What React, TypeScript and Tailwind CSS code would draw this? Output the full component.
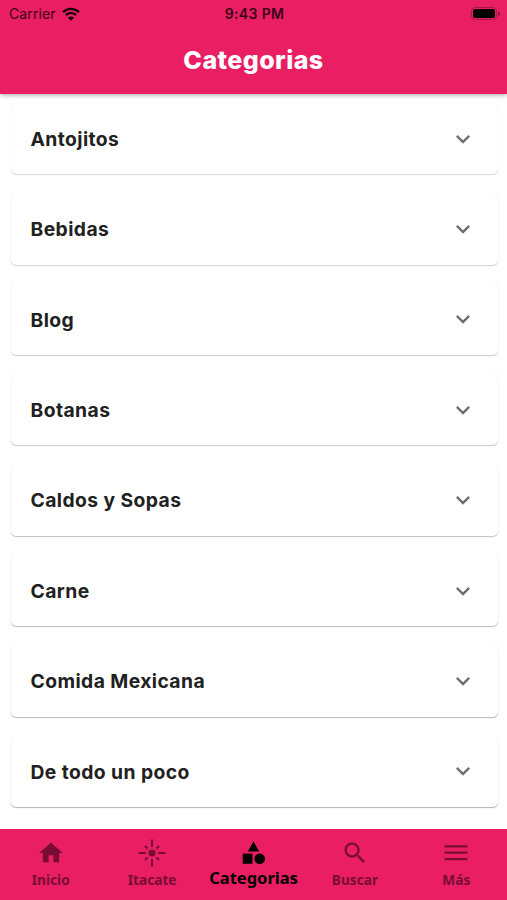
import React from "react";

const categories = [
  { name: "Antojitos", shadow: "shadow-[0_1px_1px_rgba(0,0,0,0.14),0_0_1px_rgba(0,0,0,0.1)]" },
  { name: "Bebidas", shadow: "shadow-[0_1px_1px_rgba(0,0,0,0.18),0_0_1px_rgba(0,0,0,0.1)]" },
  { name: "Blog", shadow: "shadow-[0_1px_1px_rgba(0,0,0,0.2),0_0_1px_rgba(0,0,0,0.1)]" },
  { name: "Botanas", shadow: "shadow-[0_1px_1px_rgba(0,0,0,0.22),0_0_1px_rgba(0,0,0,0.1)]" },
  { name: "Caldos y Sopas", shadow: "shadow-[0_1px_1px_rgba(0,0,0,0.24),0_0_1px_rgba(0,0,0,0.1)]" },
  { name: "Carne", shadow: "shadow-[0_1px_1px_rgba(0,0,0,0.26),0_0_1px_rgba(0,0,0,0.1)]" },
  { name: "Comida Mexicana", shadow: "shadow-[0_1px_1px_rgba(0,0,0,0.28),0_0_1px_rgba(0,0,0,0.1)]" },
  { name: "De todo un poco", shadow: "shadow-[0_1px_1px_rgba(0,0,0,0.3),0_0_1px_rgba(0,0,0,0.1)]" },
];

const icons = {
  home: <path d="M10 20v-6h4v6h5v-8h3L12 3 2 12h3v8z" />,
  flare: (
    <>
      <path d="M1 12h6M17 12h6M12 1v6M12 17v6M6.3 6.3l2.1 2.1M17.7 6.3l-2.1 2.1M6.3 17.7l2.1-2.1M17.7 17.7l-2.1-2.1" className="stroke-current" strokeWidth="1.7" />
      <circle cx="12" cy="12" r="2.9" />
    </>
  ),
  shapes: (
    <>
      <path d="M12 2 17 11H7z" />
      <path d="M2.4 13h8.7v9H2.4z" />
      <circle cx="17.5" cy="17.5" r="4.7" />
    </>
  ),
  search: <path d="M15.5 14h-.79l-.28-.27C15.41 12.59 16 11.11 16 9.5 16 5.91 13.09 3 9.5 3S3 5.91 3 9.5 5.91 16 9.5 16c1.61 0 3.09-.59 4.23-1.57l.27.28v.79l5 4.99L20.49 19l-4.99-5zm-6 0C7.01 14 5 11.99 5 9.5S7.01 5 9.5 5 14 7.01 14 9.5 11.99 14 9.5 14z" />,
  menu: <path d="M2.3 18.2h19.4v-1.9H2.3v1.9zm0-5.5h19.4v-1.9H2.3v1.9zm0-7.4v1.9h19.4V5.3H2.3z" />,
};

function Tab({ icon, label, viewBox = "0 0 24 24" }: { icon: React.ReactNode; label: string; viewBox?: string }) {
  return (
    <button className="flex flex-1 flex-col items-center pt-[10px] text-[#790c35]">
      <svg viewBox={viewBox} className="size-7 shrink-0 fill-current">{icon}</svg>
      <span className="mt-[3px] font-['Noto_Sans',sans-serif] text-[13.7px] leading-5 font-bold">{label}</span>
    </button>
  );
}

export default function App() {
  return (
    <div className="flex h-[900px] w-[507px] flex-col overflow-hidden bg-white font-['Inter',sans-serif]">
      <header className="relative z-10 h-[93.5px] shrink-0 bg-[#e91e63] shadow-[0_1px_5px_rgba(0,0,0,0.35)]">
        <div className="grid h-[27px] grid-cols-3 items-center pr-[7px] pl-[9px] text-[#3a0518]">
          <div className="flex items-center gap-[6px]">
            <span className="text-[14px] tracking-[0.1px]">Carrier</span>
            <svg viewBox="0 0 18 14" className="h-[14px] w-[18px] fill-none stroke-[#180008]">
              <path d="M1 5.1C5.6.8 12.4.8 17 5.1M3.9 8.2c3-2.8 7.2-2.8 10.2 0" strokeWidth="2.3" />
              <path d="M5.9 10.7Q9 8.3 12.1 10.7L9 13.7Z" className="fill-[#180008] stroke-none" />
            </svg>
          </div>
          <span className="text-center text-[14px] font-semibold tracking-[0.35px]">9:43 PM</span>
          <div className="flex items-center justify-end gap-px">
            <span className="flex h-[13px] w-[26px] rounded-[4px] border border-[#a5164a] p-px">
              <span className="flex-1 rounded-[2px] bg-black" />
            </span>
            <span className="h-1 w-[2px] rounded-r bg-[#8d123d]" />
          </div>
        </div>
        <h1 className="pt-[15px] text-center text-[25px] leading-9 font-extrabold tracking-[0.45px] text-white">Categorias</h1>
      </header>

      <main className="flex flex-1 flex-col gap-[19.4px] px-[10.5px] pt-[9.7px]">
        {categories.map(({ name, shadow }) => (
          <button
            key={name}
            className={`flex h-[71px] w-[487px] shrink-0 items-center justify-between rounded-[5px] bg-white pr-[21px] pl-[20px] ${shadow}`}
          >
            <span className="pt-[1.2px] text-[19.3px] font-[650] tracking-[0.42px] text-[#212121]">{name}</span>
            <svg viewBox="0 0 24 24" className="size-7 fill-[#707070]">
              <path d="M7.41 8.59 12 13.17l4.59-4.58L18 10l-6 6-6-6z" />
            </svg>
          </button>
        ))}
      </main>

      <nav className="flex h-[71px] shrink-0 bg-[#e91e63]">
        <Tab icon={icons.home} label="Inicio" />
        <Tab icon={icons.flare} label="Itacate" viewBox="0.5 0.5 23 23" />
        <button className="flex flex-1 flex-col items-center pt-[10px] text-black">
          <svg viewBox="0 0 24 24" className="size-[27px] shrink-0 fill-current">{icons.shapes}</svg>
          <span className="font-['Noto_Sans',sans-serif] text-[16.5px] leading-6 font-bold">Categorias</span>
        </button>
        <Tab icon={icons.search} label="Buscar" />
        <Tab icon={icons.menu} label="Más" />
      </nav>
    </div>
  );
}
